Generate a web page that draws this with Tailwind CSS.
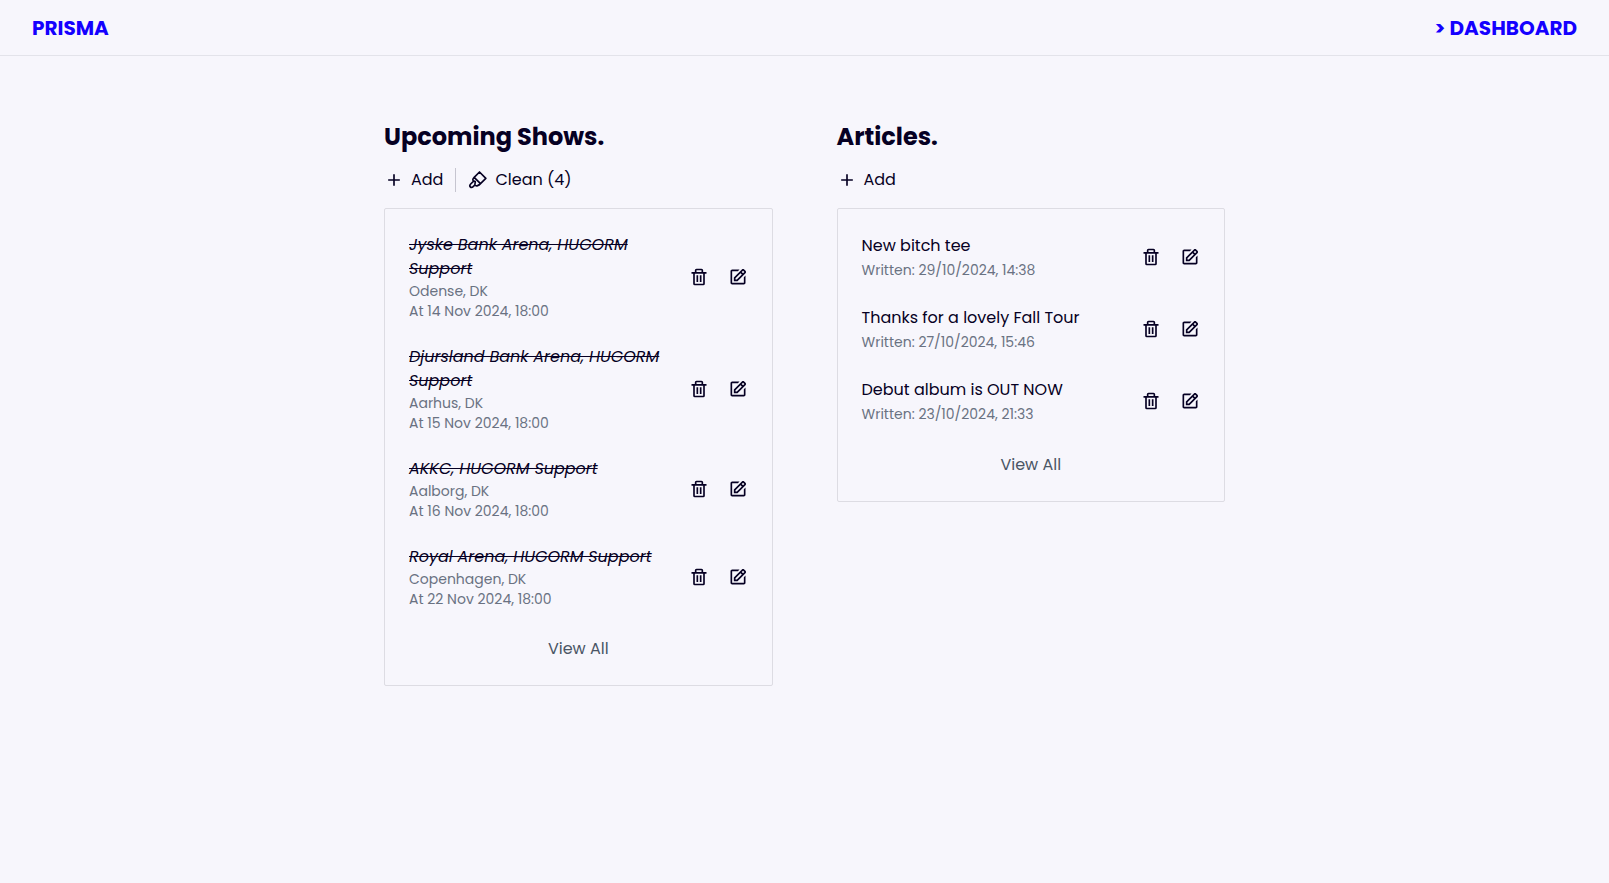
<!DOCTYPE html>
<html lang="en">
<head>
<meta charset="utf-8">
<meta name="viewport" content="width=device-width, initial-scale=1">
<title>Prisma Dashboard</title>
<script src="https://cdn.jsdelivr.net/npm/@tailwindcss/browser@4"></script>
</head>
<body class="min-h-screen bg-[#f7f6fc] font-['Poppins','Inter',sans-serif] text-base text-[#060023]">
<svg class="hidden" aria-hidden="true">
  <symbol id="plus" viewBox="0 0 24 24"><path d="M19 11h-6V5h-2v6H5v2h6v6h2v-6h6z"/></symbol>
  <symbol id="trash" viewBox="0 0 24 24"><path d="M5 20a2 2 0 0 0 2 2h10a2 2 0 0 0 2-2V8h2V6h-4V4a2 2 0 0 0-2-2H9a2 2 0 0 0-2 2v2H3v2h2zM9 4h6v2H9zM8 8h9v12H7V8z"/><path d="M9 10h2v8H9zm4 0h2v8h-2z"/></symbol>
  <symbol id="edit" viewBox="0 0 24 24"><path d="m7 17.013 4.413-.015 9.632-9.54c.378-.378.586-.88.586-1.414s-.208-1.036-.586-1.414l-1.586-1.586c-.756-.756-2.075-.752-2.825-.003L7 12.583v4.43zM18.045 4.458l1.589 1.583-1.597 1.582-1.586-1.585 1.594-1.58zM9 13.417l6.03-5.973 1.586 1.586-6.029 5.971L9 15.006v-1.589z"/><path d="M5 21h14c1.103 0 2-.897 2-2v-8.668l-2 2V19H8.158c-.026 0-.053.01-.079.01-.033 0-.066-.009-.1-.01H5V5h6.847l2-2H5c-1.103 0-2 .897-2 2v14c0 1.103.897 2 2 2z"/></symbol>
  <symbol id="brush" viewBox="0 0 24 24"><path fill="none" stroke="currentColor" stroke-width="2" stroke-linejoin="round" stroke-linecap="round" d="M13.8 2.4 21.4 10 15 16.4 7.4 8.8zM7.4 8.8C5.4 10.8 5.4 12.2 6.8 13.4L3.2 16.8C2 18.2 2 19.6 2.8 20.4C3.8 21.2 5.2 21 6.2 20L8.2 18M6.8 13.4C8.4 13.2 9 13.8 8.6 15L8.2 18C10 20 13 18.6 15 16.4"/></symbol>
</svg>

<header class="flex items-center justify-between border-b border-[#e3e3ea] px-8 pt-[14px] pb-[13px] text-xl leading-7 font-bold text-[#1400ff]">
  <a href="#">PRISMA</a>
  <a href="#">&gt; DASHBOARD</a>
</header>

<main class="mx-auto grid max-w-[841px] grid-cols-2 items-start gap-16 py-16">
  <section>
    <h2 class="text-2xl leading-[34px] font-bold">Upcoming Shows.</h2>
    <div class="mt-[14px] mb-4 flex h-6 items-center gap-3">
      <button class="flex items-center gap-[7px]"><svg class="size-5 fill-current"><use href="#plus"/></svg>Add</button>
      <span class="h-6 w-px bg-[#c6c5d0]"></span>
      <button class="flex items-center gap-[7px]"><svg class="size-5"><use href="#brush"/></svg>Clean (4)</button>
    </div>
    <div class="rounded-xs border border-[#dddce3] p-6">
      <ul class="flex flex-col gap-6">
        <li class="flex items-center justify-between gap-5">
          <div><h3 class="leading-6 italic line-through">Jyske Bank Arena, HUGORM Support</h3><p class="text-sm leading-5 text-gray-500">Odense, DK</p><p class="text-sm leading-5 text-gray-500">At 14 Nov 2024, 18:00</p></div>
          <div class="flex shrink-0 gap-[19px]"><button aria-label="Delete"><svg class="size-5 fill-current"><use href="#trash"/></svg></button><button aria-label="Edit"><svg class="size-5 fill-current"><use href="#edit"/></svg></button></div>
        </li>
        <li class="flex items-center justify-between gap-5">
          <div><h3 class="leading-6 italic line-through">Djursland Bank Arena, HUGORM Support</h3><p class="text-sm leading-5 text-gray-500">Aarhus, DK</p><p class="text-sm leading-5 text-gray-500">At 15 Nov 2024, 18:00</p></div>
          <div class="flex shrink-0 gap-[19px]"><button aria-label="Delete"><svg class="size-5 fill-current"><use href="#trash"/></svg></button><button aria-label="Edit"><svg class="size-5 fill-current"><use href="#edit"/></svg></button></div>
        </li>
        <li class="flex items-center justify-between gap-5">
          <div><h3 class="leading-6 italic line-through">AKKC, HUGORM Support</h3><p class="text-sm leading-5 text-gray-500">Aalborg, DK</p><p class="text-sm leading-5 text-gray-500">At 16 Nov 2024, 18:00</p></div>
          <div class="flex shrink-0 gap-[19px]"><button aria-label="Delete"><svg class="size-5 fill-current"><use href="#trash"/></svg></button><button aria-label="Edit"><svg class="size-5 fill-current"><use href="#edit"/></svg></button></div>
        </li>
        <li class="flex items-center justify-between gap-5">
          <div><h3 class="leading-6 italic line-through">Royal Arena, HUGORM Support</h3><p class="text-sm leading-5 text-gray-500">Copenhagen, DK</p><p class="text-sm leading-5 text-gray-500">At 22 Nov 2024, 18:00</p></div>
          <div class="flex shrink-0 gap-[19px]"><button aria-label="Delete"><svg class="size-5 fill-current"><use href="#trash"/></svg></button><button aria-label="Edit"><svg class="size-5 fill-current"><use href="#edit"/></svg></button></div>
        </li>
      </ul>
      <button class="mx-auto mt-7 block text-gray-600">View All</button>
    </div>
  </section>

  <section>
    <h2 class="text-2xl leading-[34px] font-bold">Articles.</h2>
    <div class="mt-[14px] mb-4 flex h-6 items-center gap-3">
      <button class="flex items-center gap-[7px]"><svg class="size-5 fill-current"><use href="#plus"/></svg>Add</button>
    </div>
    <div class="rounded-xs border border-[#dddce3] p-6">
      <ul class="flex flex-col gap-6">
        <li class="flex items-center justify-between gap-5">
          <div class="flex flex-col gap-0.5 py-px"><h3 class="leading-6">New bitch tee</h3><p class="text-sm leading-5 text-gray-500">Written: 29/10/2024, 14:38</p></div>
          <div class="flex shrink-0 gap-[19px]"><button aria-label="Delete"><svg class="size-5 fill-current"><use href="#trash"/></svg></button><button aria-label="Edit"><svg class="size-5 fill-current"><use href="#edit"/></svg></button></div>
        </li>
        <li class="flex items-center justify-between gap-5">
          <div class="flex flex-col gap-0.5 py-px"><h3 class="leading-6">Thanks for a lovely Fall Tour</h3><p class="text-sm leading-5 text-gray-500">Written: 27/10/2024, 15:46</p></div>
          <div class="flex shrink-0 gap-[19px]"><button aria-label="Delete"><svg class="size-5 fill-current"><use href="#trash"/></svg></button><button aria-label="Edit"><svg class="size-5 fill-current"><use href="#edit"/></svg></button></div>
        </li>
        <li class="flex items-center justify-between gap-5">
          <div class="flex flex-col gap-0.5 py-px"><h3 class="leading-6">Debut album is OUT NOW</h3><p class="text-sm leading-5 text-gray-500">Written: 23/10/2024, 21:33</p></div>
          <div class="flex shrink-0 gap-[19px]"><button aria-label="Delete"><svg class="size-5 fill-current"><use href="#trash"/></svg></button><button aria-label="Edit"><svg class="size-5 fill-current"><use href="#edit"/></svg></button></div>
        </li>
      </ul>
      <button class="mx-auto mt-7 block text-gray-600">View All</button>
    </div>
  </section>
</main>
</body>
</html>
